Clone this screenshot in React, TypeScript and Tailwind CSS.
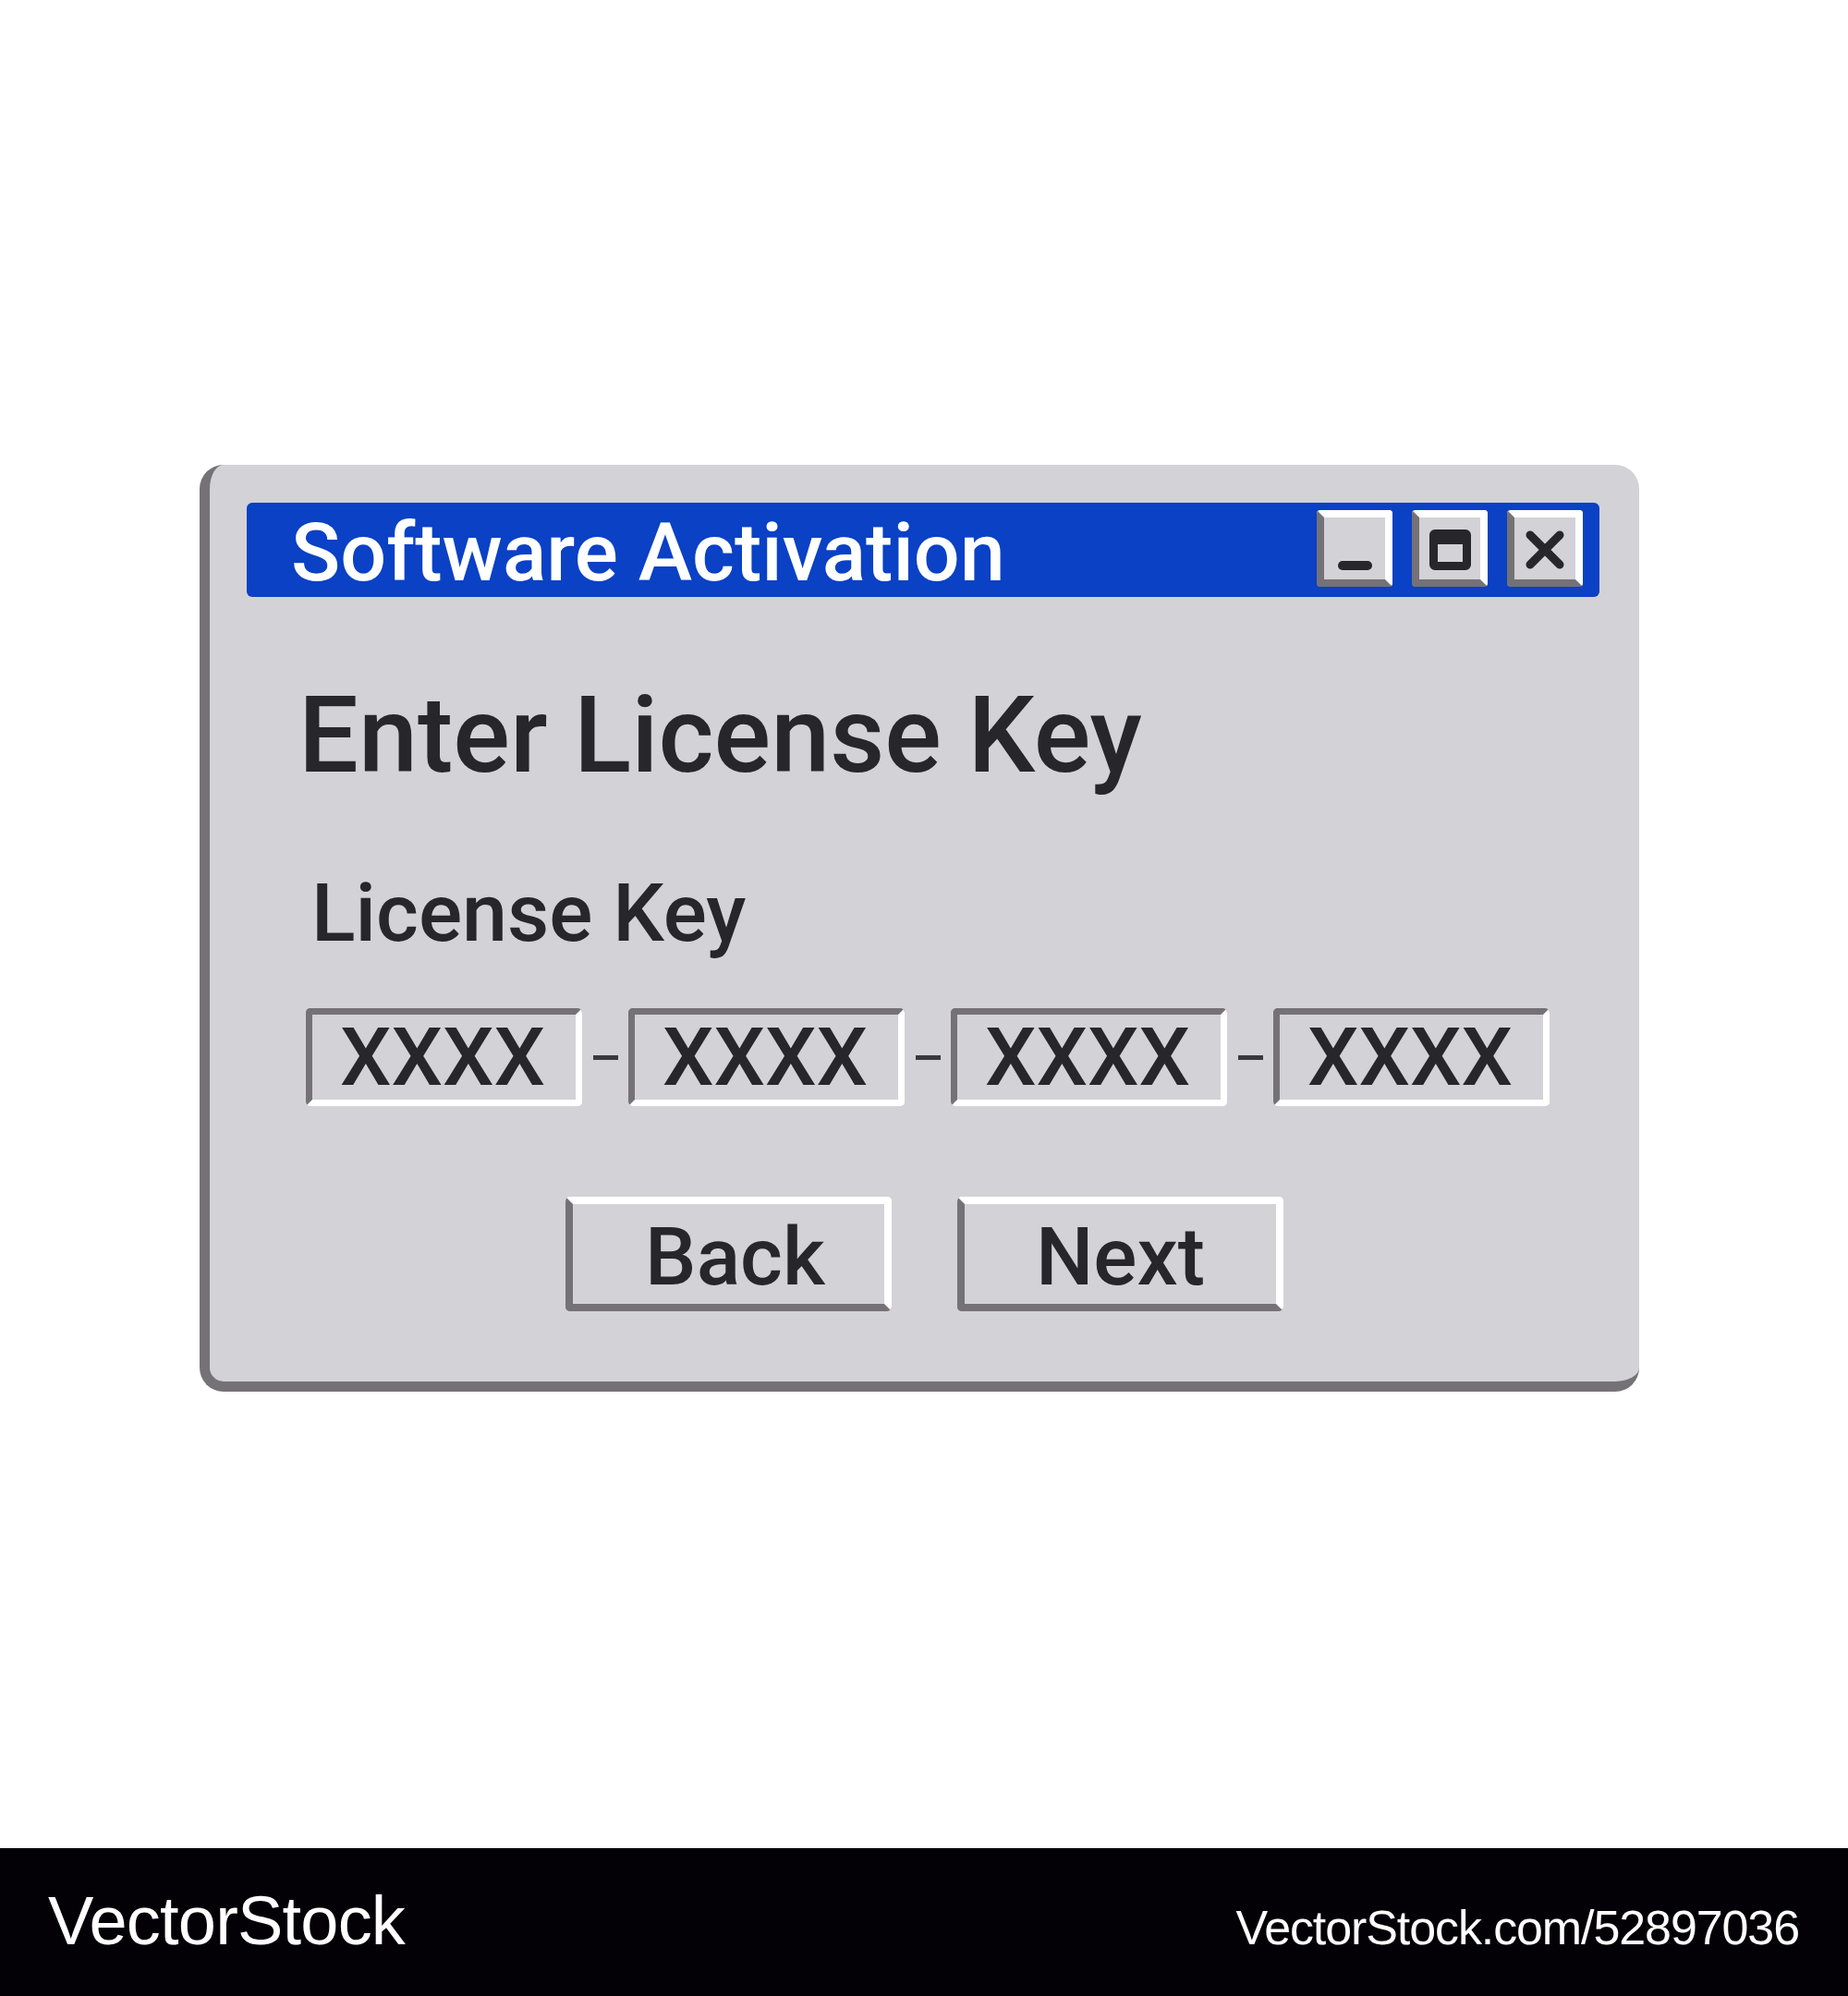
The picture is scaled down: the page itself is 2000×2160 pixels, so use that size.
import React from 'react';

const ink = 'text-[#27262b]';

function TitleButton({ children, className = '' }: { children: React.ReactNode; className?: string }) {
  return (
    <div
      className={`w-[82px] h-[83px] rounded-[4px] border-[8px] border-t-white border-r-white border-b-[#747277] border-l-[#747277] bg-[#d3d2d7] flex justify-center ${className}`}
    >
      {children}
    </div>
  );
}

function KeyField() {
  return (
    <div
      className={`w-[299px] h-[106px] rounded-[5px] border-[7px] border-t-[#747277] border-l-[#747277] border-b-white border-r-white bg-[#d3d2d7] flex items-center justify-center pr-[3px] text-[88px] font-medium leading-none ${ink}`}
    >
      XXXX
    </div>
  );
}

function Dash() {
  return (
    <div className="w-[50px] flex items-center justify-center">
      <div className="w-[27px] h-[5px] bg-[#3a393e]" />
    </div>
  );
}

function PushButton({ label, className = '' }: { label: string; className?: string }) {
  return (
    <div
      className={`w-[353px] h-[124px] rounded-[5px] border-[8px] border-t-white border-r-white border-b-[#747277] border-l-[#747277] bg-[#d3d2d7] flex items-center justify-center pt-[6px] text-[88px] font-medium leading-none ${ink} ${className}`}
    >
      {label}
    </div>
  );
}

export default function App() {
  return (
    <div className="w-[2000px] h-[2160px] bg-white flex flex-col font-['Roboto',sans-serif]">
      {/* dialog area */}
      <div className="h-[2000px] pt-[503px] pl-[216px]">
        <div className="w-[1558px] rounded-[26px] border-l-[11px] border-b-[11px] border-[#747277] bg-[#d3d2d7] pt-[41px] pb-[76px]">
          {/* title bar */}
          <div className="ml-[40px] w-[1464px] h-[102px] rounded-[6px] bg-[#0a41c5] flex items-start pt-[8px] pr-[18px]">
            <span className="pl-[48px] pt-[2px] text-[88px] font-medium leading-none text-white">Software Activation</span>
            <div className="ml-auto flex gap-[21px]">
              <TitleButton className="items-end pb-[10px]">
                <div className="w-[37px] h-[10px] rounded-full bg-[#27262b]" />
              </TitleButton>
              <TitleButton className="items-center pt-[3px]">
                <div className="w-[45px] h-[44px] rounded-[6px] border-[9px] border-t-[16px] border-[#27262b]" />
              </TitleButton>
              <TitleButton className="items-center pt-[3px]">
                <svg width="42" height="42" viewBox="0 0 42 42">
                  <path d="M5 5 L37 37 M37 5 L5 37" stroke="#27262b" strokeWidth="9" strokeLinecap="round" fill="none" />
                </svg>
              </TitleButton>
            </div>
          </div>

          <h1 className={`mt-[92px] ml-[96px] text-[115px] font-medium leading-none ${ink}`}>Enter License Key</h1>

          <div className={`mt-[91px] ml-[110px] text-[88px] font-medium leading-none ${ink}`}>License Key</div>

          <div className="mt-[59px] ml-[104px] flex">
            <KeyField />
            <Dash />
            <KeyField />
            <Dash />
            <KeyField />
            <Dash />
            <KeyField />
          </div>

          <div className="mt-[98px] flex justify-center gap-[71px]">
            <PushButton label="Back" className="pl-[14px]" />
            <PushButton label="Next" />
          </div>
        </div>
      </div>

      {/* watermark strip */}
      <div className="h-[160px] bg-[#030105] flex items-baseline justify-between pt-[42px] pl-[52px] pr-[53px] font-['Liberation_Sans',Arial,sans-serif] text-white leading-none">
        <span className="text-[74px] tracking-[-0.8px]">VectorStock</span>
        <span className="text-[52px] tracking-[-1.1px]">VectorStock.com/52897036</span>
      </div>
    </div>
  );
}
